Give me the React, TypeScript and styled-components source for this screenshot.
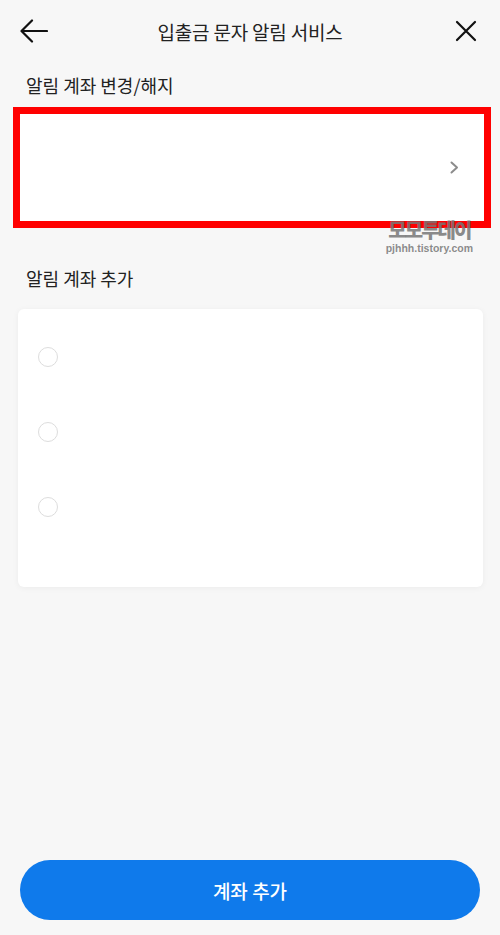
import styled, { createGlobalStyle } from "styled-components";

const GlobalStyle = createGlobalStyle`
  html, body {
    margin: 0;
    padding: 0;
    background: #f7f7f7;
  }
  body {
    font-family: "Noto Sans CJK KR", "Noto Sans", sans-serif;
    color: #222;
  }
`;

const Page = styled.div`
  width: 500px;
  height: 935px;
  display: flex;
  flex-direction: column;
  background: #f7f7f7;
  box-sizing: border-box;
  padding-bottom: 15px;
`;

const Header = styled.header`
  height: 62px;
  display: flex;
  align-items: center;
  justify-content: space-between;
  padding: 0 20px;
  box-sizing: border-box;
`;

const HeaderTitle = styled.h1`
  margin: 0;
  font-size: 19px;
  font-weight: 400;
  color: #222;
  letter-spacing: -0.2px;
`;

const IconButton = styled.button`
  width: 28px;
  height: 28px;
  padding: 0;
  border: 0;
  background: none;
  display: flex;
  align-items: center;
  justify-content: center;
`;

const SectionTitle = styled.h2<{ $top: number }>`
  margin: ${(p) => p.$top}px 0 0 26px;
  font-size: 18px;
  line-height: 27px;
  font-weight: 400;
  color: #222;
`;

const Highlight = styled.div`
  position: relative;
  margin: 8px 9px 0 13px;
  border: 7px solid #ff0000;
  height: 107px;
  background: #fff;
`;

const AccountRow = styled.div`
  height: 100%;
  display: flex;
  align-items: center;
  justify-content: flex-end;
  padding-right: 25px;
`;

/* blog watermark stamped over the screenshot */
const Watermark = styled.div`
  position: absolute;
  right: 11px;
  top: 106px;
  display: flex;
  flex-direction: column;
  align-items: center;
  color: rgba(118, 118, 118, 0.85);
  pointer-events: none;
`;

const WatermarkName = styled.span`
  font-size: 20px;
  font-weight: 900;
  line-height: 20px;
  letter-spacing: -2px;
`;

const WatermarkUrl = styled.span`
  margin-top: 2px;
  font-family: "Liberation Sans", Arial, sans-serif;
  font-size: 10.5px;
  font-weight: 700;
  line-height: 12px;
`;

const Card = styled.div`
  margin: 17px 17px 0 18px;
  height: 278px;
  background: #fff;
  border-radius: 6px;
  box-shadow: 0 1px 6px rgba(0, 0, 0, 0.05);
  padding: 10px 20px 0;
  box-sizing: border-box;
`;

const OptionRow = styled.label`
  height: 75px;
  display: flex;
  align-items: center;
`;

const Radio = styled.span`
  width: 20px;
  height: 20px;
  border-radius: 50%;
  border: 1.5px solid #dddddd;
  box-sizing: border-box;
  background: #fff;
`;

const Spacer = styled.div`
  flex: 1;
`;

const PrimaryButton = styled.button`
  margin: 0 20px;
  height: 60px;
  border: 0;
  border-radius: 30px;
  background: #0f7aeb;
  color: #fff;
  font-family: "Noto Sans CJK KR", "Noto Sans", sans-serif;
  font-size: 19px;
  font-weight: 500;
`;

function BackIcon() {
  return (
    <svg width="28" height="24" viewBox="0 0 28 24" fill="none">
      <path
        d="M27 12H2M12 1.5L1.5 12L12 22.5"
        stroke="#111"
        strokeWidth="2.2"
        strokeLinecap="round"
        strokeLinejoin="round"
      />
    </svg>
  );
}

function CloseIcon() {
  return (
    <svg width="22" height="22" viewBox="0 0 22 22" fill="none">
      <path
        d="M2 2L20 20M20 2L2 20"
        stroke="#111"
        strokeWidth="2.2"
        strokeLinecap="round"
      />
    </svg>
  );
}

function Chevron() {
  return (
    <svg width="9" height="13" viewBox="0 0 9 13" fill="none">
      <path
        d="M1.5 1.5L7 6.5L1.5 11.5"
        stroke="#8c8c8c"
        strokeWidth="2"
        strokeLinecap="round"
        strokeLinejoin="round"
      />
    </svg>
  );
}

export default function App() {
  const options = [0, 1, 2];
  return (
    <>
      <GlobalStyle />
      <Page>
        <Header>
          <IconButton aria-label="back">
            <BackIcon />
          </IconButton>
          <HeaderTitle>입출금 문자 알림 서비스</HeaderTitle>
          <IconButton aria-label="close">
            <CloseIcon />
          </IconButton>
        </Header>

        <SectionTitle $top={10}>알림 계좌 변경/해지</SectionTitle>
        <Highlight>
          <AccountRow>
            <Chevron />
          </AccountRow>
          <Watermark>
            <WatermarkName>모모투데이</WatermarkName>
            <WatermarkUrl>pjhhh.tistory.com</WatermarkUrl>
          </Watermark>
        </Highlight>

        <SectionTitle $top={37}>알림 계좌 추가</SectionTitle>
        <Card>
          {options.map((o) => (
            <OptionRow key={o}>
              <Radio />
            </OptionRow>
          ))}
        </Card>

        <Spacer />
        <PrimaryButton>계좌 추가</PrimaryButton>
      </Page>
    </>
  );
}
